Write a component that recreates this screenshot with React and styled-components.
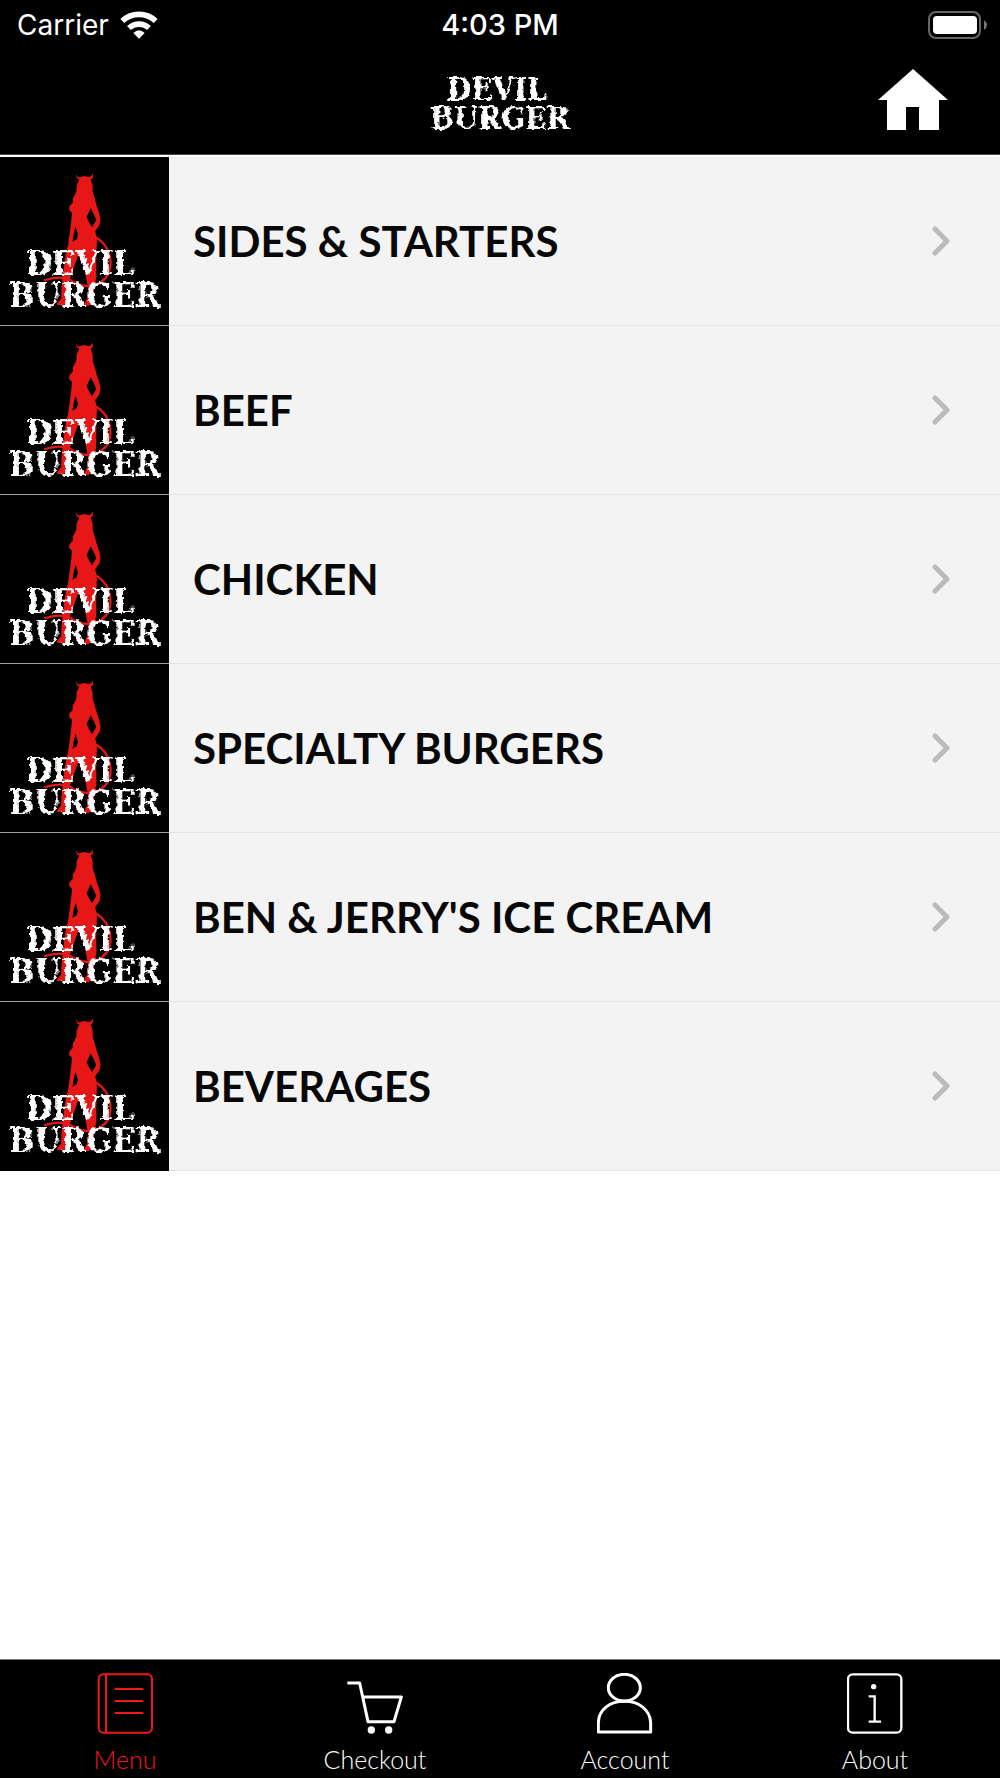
import React from 'react'
import styled, { createGlobalStyle } from 'styled-components'

const GlobalStyle = createGlobalStyle`
    * {
        box-sizing: border-box;
    }

    body {
        margin: 0;
        background: #fff;
        font-family: Lato, "Open Sans", sans-serif;
    }
`

const Screen = styled.div`
    display: flex;
    flex-direction: column;
    min-height: 100vh;
`

const Header = styled.header`
    background: #000;
    color: #fff;
    border-bottom: 1px solid #4a4a4a;
    margin-bottom: 2px;
`

const StatusBar = styled.div`
    display: grid;
    grid-template-columns: 1fr auto 1fr;
    align-items: center;
    height: 50px;
    padding: 0 13px;
    font-family: Inter, sans-serif;
    font-size: 28px;
    line-height: 34px;
`

const Carrier = styled.div`
    display: flex;
    align-items: center;
    gap: 11px;
    padding-left: 4px;
`

const Clock = styled.div`
    font-size: 29px;
    font-weight: 500;
`

const BatteryIcon = styled.svg`
    justify-self: end;
    width: 60px;
    height: 28px;
`

const WifiIcon = styled.svg`
    width: 38px;
    height: 28px;
`

const NavBar = styled.nav`
    display: grid;
    grid-template-columns: 1fr auto 1fr;
    align-items: start;
    height: 104px;
    padding: 19px 52px 0;
`

const NavLogo = styled.svg`
    grid-column: 2;
    width: 160px;
    height: 72px;
`

const HomeButton = styled.button`
    justify-self: end;
    display: flex;
    padding: 0;
    border: 0;
    background: none;
    cursor: pointer;

    svg {
        width: 70px;
        height: 61px;
    }
`

const LogoText = styled.text`
    font-family: "DejaVu Serif Condensed", "DejaVu Serif", serif;
    font-stretch: condensed;
    font-weight: bold;
    font-size: ${props => props.$size}px;
    text-anchor: middle;
    fill: #fff;
`

const CategoryList = styled.ul`
    flex: 1;
    margin: 0;
    padding: 0;
    list-style: none;
`

const CategoryLink = styled.a`
    display: flex;
    align-items: center;
    height: 169px;
    padding-right: 50px;
    background: #f3f3f3;
    border-bottom: 1px solid #e4e4e4;
    color: #080808;
    text-decoration: none;
`

const Thumb = styled.svg`
    flex: none;
    width: 169px;
    height: 169px;
    margin-bottom: -1px;
    background: #000;
    border-bottom: 1px solid #a0a0a0;

    li:last-child & {
        border-bottom-color: #000;
    }
`

const CategoryName = styled.span`
    flex: 1;
    padding-left: 24px;
    font-size: 42px;
    line-height: 48px;
    font-weight: 700;
`

const Chevron = styled.svg`
    width: 18px;
    height: 30px;
`

const TabBar = styled.nav`
    display: grid;
    grid-template-columns: repeat(4, 1fr);
    height: 119px;
    background: #000;
    border-top: 1px solid #777;
`

const Tab = styled.a`
    display: flex;
    flex-direction: column;
    align-items: center;
    gap: 10px;
    padding-top: 13px;
    color: ${props => (props.$active ? '#f01818' : '#fff')};
    font-size: 25px;
    line-height: 30px;
    font-weight: 300;
    text-decoration: none;
`

const TabIcon = styled.svg`
    width: 56px;
    height: 61px;
    fill: none;
    stroke: currentColor;
    stroke-width: 6;
`

// worn edges for the logo lettering
const RoughFilter = ({ id, scale, frequency }) => (
    <filter id={id} x="-5%" y="-10%" width="110%" height="120%">
        <feTurbulence type="fractalNoise" baseFrequency={frequency} numOctaves="2" seed="4" result="noise" />
        <feDisplacementMap in="SourceGraphic" in2="noise" scale={scale} xChannelSelector="R" yChannelSelector="G" />
    </filter>
)

const DevilThumb = ({ id }) => (
    <Thumb viewBox="0 21 507 507" aria-hidden="true">
        <defs><RoughFilter id={id} scale="16" frequency="0.07" /></defs>
        <g fill="#e81717">
            <path
                fillRule="evenodd"
                d="M228 72 C228 82 231 87 238 89 L230 106 L229 125 L223 139 L218 146 L218 160 L208 170 L207 181 L216 189 L212 228 L208 258 L204 288 L199 303 L193 340 L188 382 L184 420 L183 448 L170 463 L172 468 L196 467 L198 430 L209 389 L233 322 L241 303 L252 345 L259 390 L265 419 L262 447 L249 470 L267 471 L280 452 L282 420 L289 384 L289 326 L291 273 L286 244 L299 226 L302 209 L297 188 L290 167 L284 145 L278 126 L278 107 L272 89 C279 86 281 80 278 71 C276 77 273 81 267 82 C258 78 246 78 239 83 C233 82 230 78 228 72 Z M272 176 L283 196 L289 212 L276 233 L265 214 L260 202 Z M227 232 L234 256 L230 269 L217 277 L222 247 Z"
            />
            <path
                d="M287 263 C337 291 348 366 307 395 C278 419 239 413 207 390 C183 381 157 385 132 393"
                fill="none"
                stroke="#e81717"
                strokeWidth="7"
            />
        </g>
        <LogoText $size="102" filter={`url(#${id})`}>
            <tspan x="240" y="376">DEVIL</tspan>
            <tspan x="254" y="473">BURGER</tspan>
        </LogoText>
    </Thumb>
)

const categories = [
    'SIDES & STARTERS',
    'BEEF',
    'CHICKEN',
    'SPECIALTY BURGERS',
    "BEN & JERRY'S ICE CREAM",
    'BEVERAGES',
]

const App = () => (
    <Screen>
        <GlobalStyle />
        <Header>
            <StatusBar>
                <Carrier>
                    <span>Carrier</span>
                    <WifiIcon viewBox="359 28 114 84" fill="none" stroke="#fff" strokeWidth="17" aria-hidden="true">
                        <path d="M366 58 A73 73 0 0 1 466 58" />
                        <path d="M386 79 A44 44 0 0 1 446 79" />
                        <path d="M416 111 L399 94 Q416 78 433 94 Z" fill="#fff" stroke="none" />
                    </WifiIcon>
                </Carrier>
                <Clock>4:03 PM</Clock>
                <BatteryIcon viewBox="0 0 60 28" aria-hidden="true">
                    <rect x="2" y="1" width="51" height="26" rx="7" fill="none" stroke="#666" strokeWidth="2" />
                    <rect x="6" y="5" width="44" height="18" rx="4" fill="#fff" />
                    <path d="M57 9 Q63 14 57 19 Z" fill="#777" />
                </BatteryIcon>
            </StatusBar>
            <NavBar>
                <NavLogo viewBox="0 0 160 72" role="img" aria-label="Devil Burger">
                    <defs><RoughFilter id="rough-nav" scale="5" frequency="0.2" /></defs>
                    <LogoText $size="31" filter="url(#rough-nav)">
                        <tspan x="77" y="31">DEVIL</tspan>
                        <tspan x="80" y="60">BURGER</tspan>
                    </LogoText>
                </NavLogo>
                <HomeButton type="button" aria-label="Home">
                    <svg viewBox="0 0 70 61">
                        <path d="M35 0 L70 31 H61 V61 H41 V38 H28 V61 H9 V31 H0 Z" fill="#fff" />
                    </svg>
                </HomeButton>
            </NavBar>
        </Header>

        <CategoryList>
            {categories.map((name, i) => (
                <li key={name}>
                    <CategoryLink href="#">
                        <DevilThumb id={`rough-${i}`} />
                        <CategoryName>{name}</CategoryName>
                        <Chevron viewBox="0 0 18 30" aria-hidden="true">
                            <path d="M3 3 L15 15 L3 27" fill="none" stroke="#bbb" strokeWidth="5" strokeLinecap="round" strokeLinejoin="round" />
                        </Chevron>
                    </CategoryLink>
                </li>
            ))}
        </CategoryList>

        <TabBar>
            <Tab href="#" $active>
                <TabIcon viewBox="81 69 168 183" aria-hidden="true">
                    <rect x="86" y="73" width="160" height="175" rx="14" />
                    <path d="M108 73 V248 M134 117 H220 M134 153 H220 M134 189 H220" />
                </TabIcon>
                Menu
            </Tab>
            <Tab href="#">
                <TabIcon viewBox="111 69 168 183" aria-hidden="true">
                    <path d="M112 99 H149 L174 215 H252 L274 141 H159" strokeWidth="9" strokeLinejoin="round" />
                    <circle cx="184" cy="240" r="11" fill="currentColor" stroke="none" />
                    <circle cx="236" cy="240" r="11" fill="currentColor" stroke="none" />
                </TabIcon>
                Checkout
            </Tab>
            <Tab href="#">
                <TabIcon viewBox="111 69 168 183" aria-hidden="true">
                    <ellipse cx="193" cy="113" rx="48" ry="40" strokeWidth="9" />
                    <path d="M115 246 V218 C116 179 149 154 193 154 C237 154 270 179 272 218 V246 Z" strokeWidth="9" strokeLinejoin="round" />
                </TabIcon>
                Account
            </Tab>
            <Tab href="#">
                <TabIcon viewBox="111 69 168 183" aria-hidden="true">
                    <rect x="114" y="73" width="160" height="175" rx="14" strokeWidth="7" />
                    <circle cx="191" cy="110" r="8" fill="currentColor" stroke="none" />
                    <path d="M176 139 H194 V215 M176 215 H213" strokeWidth="7" />
                </TabIcon>
                About
            </Tab>
        </TabBar>
    </Screen>
)

export default App
